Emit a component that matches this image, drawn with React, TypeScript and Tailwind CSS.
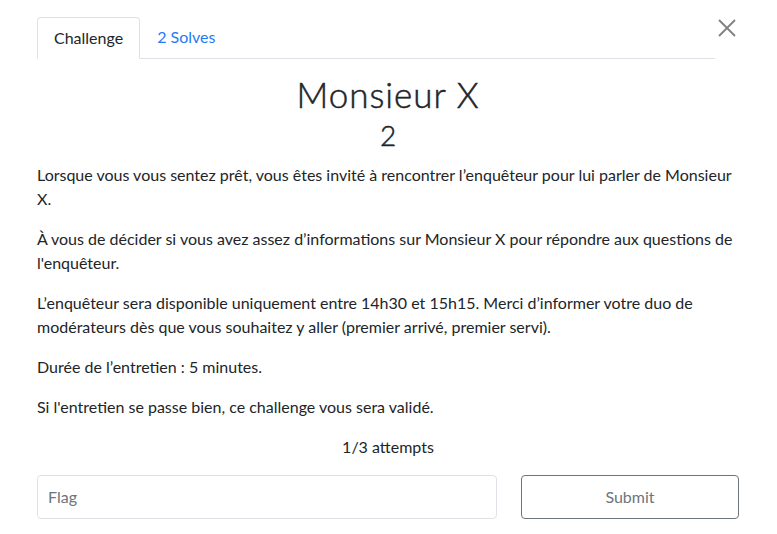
import { useState } from "react";

const PARAGRAPHS = [
  "Lorsque vous vous sentez prêt, vous êtes invité à rencontrer l’enquêteur pour lui parler de Monsieur X.",
  "À vous de décider si vous avez assez d’informations sur Monsieur X pour répondre aux questions de l'enquêteur.",
  "L’enquêteur sera disponible uniquement entre 14h30 et 15h15. Merci d’informer votre duo de modérateurs dès que vous souhaitez y aller (premier arrivé, premier servi).",
  "Durée de l’entretien : 5 minutes.",
  "Si l'entretien se passe bien, ce challenge vous sera validé.",
];

export default function App() {
  const [flag, setFlag] = useState("");

  return (
    <main className="relative min-h-[534px] w-[777px] bg-white font-['Lato','Liberation_Sans',sans-serif] text-[#212529]">
      <button
        type="button"
        aria-label="Close"
        className="absolute right-[41px] top-[19px] p-0 text-[#808080]"
      >
        <svg width="18" height="18" viewBox="0 0 18 18" fill="none">
          <path d="M1 1L17 17M17 1L1 17" stroke="currentColor" strokeWidth="1.8" />
        </svg>
      </button>

      <div className="pl-[37px] pr-[38px] pt-[17px]">
        <nav className="mr-[24px] flex border-b border-[#dee2e6]">
          <span className="-mb-px rounded-t border border-[#dee2e6] border-b-white bg-white px-4 py-2 text-base leading-6">
            Challenge
          </span>
          <span className="px-[17px] py-2 text-base leading-6 text-[#1f7af5]">2 Solves</span>
        </nav>

        <h3 className="mt-[14px] text-center text-[35px] font-light leading-[1.2] tracking-[1px] [-webkit-text-stroke:0.5px_#212529]">
          Monsieur X
        </h3>
        <p className="mt-[4px] text-center text-[28px] font-light leading-[1.2] [-webkit-text-stroke:0.5px_#212529]">
          2
        </p>

        <div className="mt-[10px] pr-[3px] text-base leading-6">
          {PARAGRAPHS.map((text) => (
            <p key={text} className="mb-4">
              {text}
            </p>
          ))}
        </div>

        <p className="text-center text-base leading-6">1/3 attempts</p>

        <div className="mt-4 flex gap-6">
          <input
            value={flag}
            onChange={(e) => setFlag(e.target.value)}
            placeholder="Flag"
            className="h-[44px] w-[460px] rounded border border-[#dee2e6] px-[10px] text-base outline-none placeholder:text-[#6c757d]"
          />
          <button
            type="button"
            className="h-[44px] w-[218px] rounded border border-[#6c757d] text-base text-[#6c757d]"
          >
            Submit
          </button>
        </div>
      </div>
    </main>
  );
}
